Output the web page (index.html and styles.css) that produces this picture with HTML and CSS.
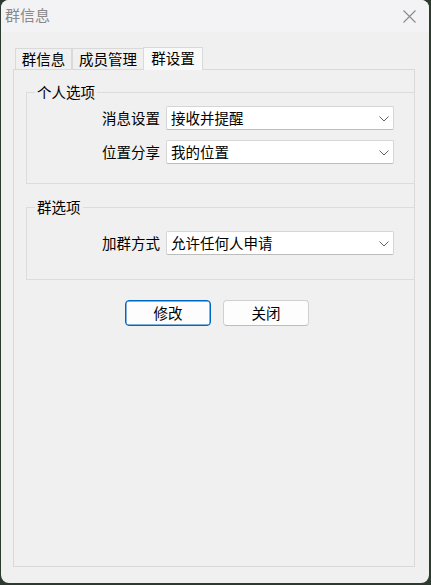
FILE: index.html
```html
<!DOCTYPE html>
<html lang="zh-CN">
<head>
<meta charset="utf-8">
<title>群信息</title>
<link rel="stylesheet" href="styles.css">
</head>
<body>
<div class="window">
  <div class="titlebar">
    <span class="title">群信息</span>
    <span class="close">
      <svg width="13" height="13" viewBox="0 0 13 13"><path d="M0.5 0.5 L12.5 12.5 M12.5 0.5 L0.5 12.5" stroke="#8a8a8a" stroke-width="1.1" fill="none"/></svg>
    </span>
  </div>
  <div class="tabs">
    <div class="tab t1">群信息</div>
    <div class="tab t2">成员管理</div>
    <div class="tab t3 active">群设置</div>
  </div>
  <div class="pane">
    <div class="group g1">
      <span class="group-title">个人选项</span>
      <div class="form">
        <label class="lbl">消息设置</label>
        <div class="combo"><span>接收并提醒</span><svg class="chev" width="10" height="6" viewBox="0 0 10 6"><path d="M0.5 0.5 L5 5 L9.5 0.5" stroke="#606060" stroke-width="1" fill="none"/></svg></div>
        <label class="lbl">位置分享</label>
        <div class="combo"><span>我的位置</span><svg class="chev" width="10" height="6" viewBox="0 0 10 6"><path d="M0.5 0.5 L5 5 L9.5 0.5" stroke="#606060" stroke-width="1" fill="none"/></svg></div>
      </div>
    </div>
    <div class="group g2">
      <span class="group-title">群选项</span>
      <div class="form">
        <label class="lbl">加群方式</label>
        <div class="combo"><span>允许任何人申请</span><svg class="chev" width="10" height="6" viewBox="0 0 10 6"><path d="M0.5 0.5 L5 5 L9.5 0.5" stroke="#606060" stroke-width="1" fill="none"/></svg></div>
      </div>
    </div>
    <div class="buttons">
      <button class="btn primary">修改</button>
      <button class="btn">关闭</button>
    </div>
  </div>
</div>
</body>
</html>
```

FILE: styles.css
```css
html, body {
  margin: 0;
  padding: 0;
}
body {
  background: #2c3a2f;
  width: 431px;
  height: 585px;
  overflow: hidden;
  font-family: "Noto Sans CJK SC", "Noto Sans", sans-serif;
  font-size: 14.5px;
  color: #000;
}
.window {
  margin-left: 1px;
  width: 428px;
  height: 583px;
  background: #f0f0f0;
  border-radius: 8px;
  overflow: hidden;
  display: flex;
  flex-direction: column;
}
.titlebar {
  height: 32px;
  flex: 0 0 32px;
  background: #f3f3f6;
  display: flex;
  align-items: center;
  justify-content: space-between;
  box-sizing: border-box;
  padding: 0 13px 0 4px;
}
.title {
  font-size: 15px;
  color: #8a8a8a;
  line-height: 20px;
  margin-top: -2px;
}
.close {
  display: flex;
  margin-top: 0;
}
.tabs {
  display: flex;
  align-items: flex-end;
  padding: 15px 0 0 14px;
  position: relative;
  z-index: 2;
}
.tab {
  box-sizing: border-box;
  height: 21px;
  border: 1px solid #d9d9d9;
  border-bottom: none;
  background: #f0f0f0;
  text-align: center;
  line-height: 19px;
  white-space: nowrap;
}
.t1 { width: 57px; }
.t2 { width: 72px; margin-left: 0; }
.t3 { width: 60px; margin-left: -1px; }
.tab.active {
  height: 23px;
  margin-bottom: -1px;
  background: #f9f9f9;
  line-height: 20px;
}
.pane {
  margin-left: 12px;
  width: 402px;
  height: 498px;
  box-sizing: border-box;
  border: 1px solid #d9d9d9;
  padding: 22px 0 0 12px;
  display: flex;
  flex-direction: column;
}
.group {
  position: relative;
  border: 1px solid #dcdcdc;
  margin-right: -1px;
}
.g1 {
  padding: 13px 0 19px 0;
}
.g2 {
  margin-top: 23px;
  padding: 23px 0 24px 0;
}
.group-title {
  position: absolute;
  top: -10px;
  left: 8px;
  padding: 0 2px;
  background: #f0f0f0;
  line-height: 18px;
  font-size: 14.5px;
}
.form {
  display: grid;
  grid-template-columns: 133px 228px;
  column-gap: 6px;
  row-gap: 10px;
  align-items: center;
}
.lbl {
  text-align: right;
  line-height: 18px;
  white-space: nowrap;
}
.combo {
  box-sizing: border-box;
  height: 24px;
  background: #fff;
  border: 1px solid #d6d6d6;
  border-bottom-color: #bcbcbc;
  border-radius: 2px;
  display: flex;
  align-items: center;
  justify-content: space-between;
  padding: 0 4px 0 4px;
  line-height: 18px;
}
.chev {
  margin-right: 0;
  margin-top: 1px;
}
.buttons {
  display: flex;
  justify-content: center;
  gap: 12px;
  margin-top: 20px;
  padding-right: 6px;
}
.btn {
  box-sizing: border-box;
  width: 86px;
  height: 26px;
  font-family: "Noto Sans CJK SC", "Noto Sans", sans-serif;
  font-size: 14.5px;
  color: #000;
  background: #fdfdfd;
  border: 1px solid #d0d0d0;
  border-bottom-color: #bdbdbd;
  border-radius: 4px;
  padding: 0;
  line-height: 22px;
}
.btn.primary {
  border: 1px solid #0067c0;
  box-shadow: inset 0 0 0 0.5px #0067c0;
}
```
